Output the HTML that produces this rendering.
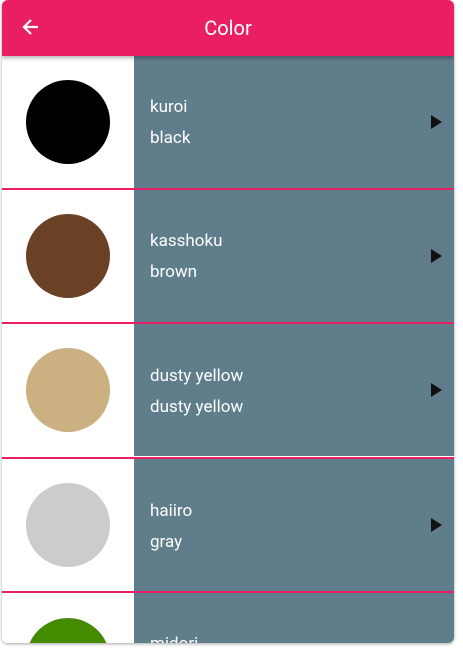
<!DOCTYPE html>
<html><head><style>
*{margin:0;padding:0;box-sizing:border-box}
body{width:463px;height:649px;background:#fff;position:relative;overflow:hidden;font-family:"Roboto","Liberation Sans",sans-serif}
.card{position:absolute;left:2px;top:0;width:452px;height:643px;border-radius:6px;overflow:hidden;background:#fff;box-shadow:0 1px 3px rgba(0,0,0,.35)}
.hdr{position:absolute;left:0;top:0;width:452px;height:56px;background:#e91e63;box-shadow:0 2px 4px rgba(0,0,0,.3);z-index:2}
.hdr .t{position:absolute;left:0;right:0;top:16px;text-align:center;color:#fff;font-size:20px}
.hdr svg{position:absolute;left:20px;top:18px}
.row{position:absolute;left:0;width:452px;height:132px}
.row .l{position:absolute;left:0;top:0;width:132px;height:132px;background:#fff}
.row .r{position:absolute;left:132px;top:0;right:0;height:132px;background:#607d8b}
.dv{position:absolute;left:0;width:452px;height:2px;background:#e91e63}
.c{position:absolute;left:24px;top:24px;width:84px;height:84px;border-radius:50%}
.tx{position:absolute;left:16px;color:#fff;font-size:17px}
.ar{position:absolute;left:297px;top:59px;width:0;height:0;border-top:7px solid transparent;border-bottom:7px solid transparent;border-left:11px solid #111}
</style></head><body>
<div class="card">
<div class="hdr"><svg width="18" height="18" viewBox="0 0 18 18"><path d="M16 9H3M9 2L2 9l7 7" stroke="#fff" stroke-width="2.2" fill="none"/></svg><div class="t">Color</div></div>
<div class="row" style="top:56px"><div class="l"><div class="c" style="background:#000"></div></div><div class="r"><div class="tx" style="top:41px">kuroi</div><div class="tx" style="top:72px">black</div><div class="ar"></div></div></div>
<div class="dv" style="top:188px"></div>
<div class="row" style="top:190px"><div class="l"><div class="c" style="background:#6b4126"></div></div><div class="r"><div class="tx" style="top:41px">kasshoku</div><div class="tx" style="top:72px">brown</div><div class="ar"></div></div></div>
<div class="dv" style="top:322px"></div>
<div class="row" style="top:324px"><div class="l"><div class="c" style="background:#cbb081"></div></div><div class="r"><div class="tx" style="top:42px">dusty yellow</div><div class="tx" style="top:73px">dusty yellow</div><div class="ar"></div></div></div>
<div class="dv" style="top:457px"></div>
<div class="row" style="top:459px"><div class="l"><div class="c" style="background:#cccccc"></div></div><div class="r"><div class="tx" style="top:42px">haiiro</div><div class="tx" style="top:73px">gray</div><div class="ar"></div></div></div>
<div class="dv" style="top:591px"></div>
<div class="row" style="top:593px;height:50px"><div class="l"><div class="c" style="background:#448b00;top:25px"></div></div><div class="r"><div class="tx" style="top:41px">midori</div></div></div>
</div>
</body></html>
